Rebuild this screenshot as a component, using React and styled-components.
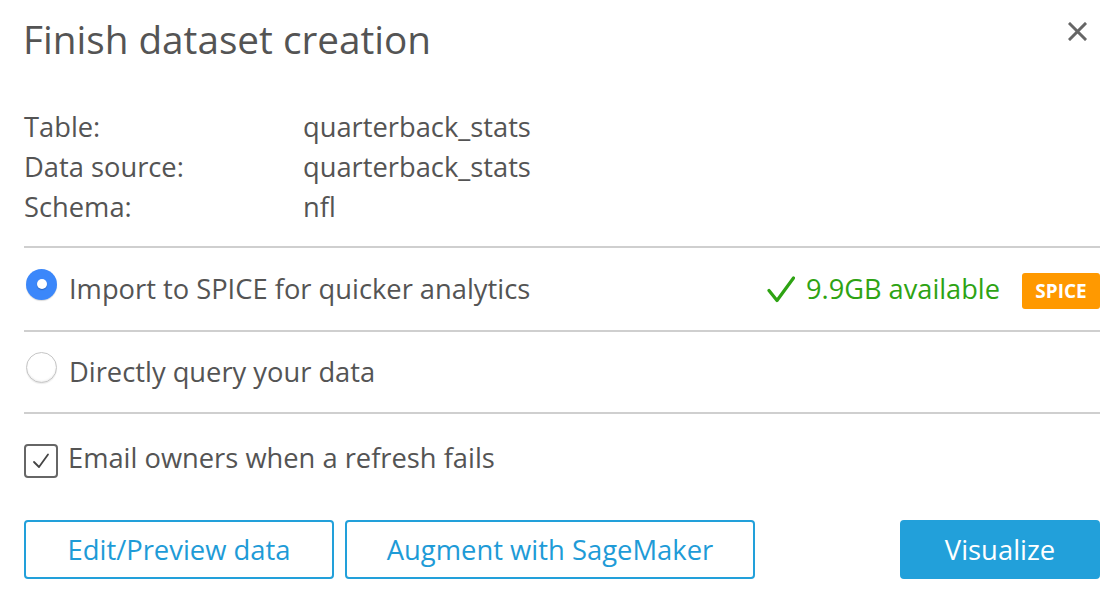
import React from "react";
import styled, { createGlobalStyle } from "styled-components";

const GlobalStyle = createGlobalStyle`
  html, body { margin: 0; padding: 0; background: #fff; }
  body { font-family: "Open Sans", "Noto Sans", sans-serif; color: #545454; }
  * { box-sizing: border-box; }
`;

const Dialog = styled.div`
  width: 1120px;
  height: 602px;
  padding: 16px 20px 0 23px;
  background: #fff;
`;

const Header = styled.div`
  display: flex;
  justify-content: space-between;
  align-items: flex-start;
`;

const Title = styled.h1`
  margin: 0;
  font-size: 38.7px;
  line-height: 46px;
  font-weight: 400;
  color: #545454;
`;

const CloseButton = styled.button`
  width: 19px;
  height: 19px;
  margin: 6px 13px 0 0;
  padding: 0;
  border: 0;
  background: none;
  display: flex;
  cursor: pointer;
`;

const InfoGrid = styled.div`
  display: grid;
  grid-template-columns: 279px 1fr;
  margin-top: 45px;
  padding: 0 0 19px 1px;
  font-size: 27.3px;
  line-height: 40px;
  color: #545454;
`;

const InfoLabel = styled.div``;
const InfoValue = styled.div``;

const Divider = styled.div`
  height: 2px;
  background: #cfcfcf;
  margin-left: 1px;
`;

const OptionRow = styled.div`
  display: flex;
  align-items: center;
  height: ${(p) => p.$h}px;
  padding-left: 3px;
`;

const Radio = styled.span`
  width: 31px;
  height: 31px;
  border-radius: 50%;
  flex: none;
  margin-bottom: 9px;
  margin-right: 12px;
  display: flex;
  align-items: center;
  justify-content: center;
  background: ${(p) => (p.$checked ? "#3b87fa" : "#fff")};
  border: ${(p) => (p.$checked ? "none" : "1.5px solid #c6c6c6")};
  box-shadow: ${(p) =>
    p.$checked ? "0 1px 1px rgba(0,0,0,0.15)" : "inset 0 -1px 2px rgba(0,0,0,0.08), 0 1px 1px rgba(0,0,0,0.08)"};
`;

const RadioDot = styled.span`
  width: 10px;
  height: 10px;
  border-radius: 50%;
  background: #fff;
  margin-top: -1px;
  box-shadow: 0 1px 1px rgba(0, 0, 0, 0.25);
`;

const OptionLabel = styled.span`
  font-size: 27.3px;
  line-height: 40px;
  color: #545454;
  flex: 1;
`;

const Availability = styled.span`
  display: flex;
  align-items: center;
  gap: 11px;
  font-size: 27.2px;
  font-weight: 500;
  line-height: 40px;
  color: #2ea313;
  margin-right: 22px;
`;

const Badge = styled.span`
  width: 78px;
  height: 36px;
  border-radius: 3px;
  background: #ff9900;
  color: #fff;
  font-size: 19px;
  font-weight: 700;
  display: flex;
  align-items: center;
  justify-content: center;
  margin-top: 4px;
`;

const CheckRow = styled.div`
  display: flex;
  align-items: flex-start;
  padding-top: 23.5px;
  padding-left: 1px;
`;

const CheckBox = styled.span`
  width: 34px;
  height: 34px;
  flex: none;
  margin-top: 6.5px;
  margin-right: 10px;
  border: 2px solid #666;
  border-radius: 4px;
  display: flex;
  align-items: center;
  justify-content: center;
`;

const Buttons = styled.div`
  display: flex;
  align-items: center;
  margin-top: 42px;
  padding-left: 1px;
`;

const Button = styled.button`
  height: 59px;
  width: ${(p) => p.$w}px;
  margin-right: ${(p) => p.$mr || 0}px;
  margin-left: ${(p) => (p.$push ? "auto" : "0")};
  border-radius: 4px;
  border: 2px solid #22a0da;
  background: ${(p) => (p.$primary ? "#22a0da" : "#fff")};
  color: ${(p) => (p.$primary ? "#fff" : "#1e9bd7")};
  font-family: "Open Sans", "Noto Sans", sans-serif;
  font-size: 27.4px;
  font-weight: 500;
  padding: 0;
  cursor: pointer;
`;

export default function App() {
  return (
    <>
      <GlobalStyle />
      <Dialog>
        <Header>
          <Title>Finish dataset creation</Title>
          <CloseButton aria-label="Close">
            <svg width="19" height="19" viewBox="0 0 19 19">
              <path d="M2 2 L17 17 M17 2 L2 17" stroke="#666" strokeWidth="3" strokeLinecap="square" />
            </svg>
          </CloseButton>
        </Header>
        <InfoGrid>
          <InfoLabel>Table:</InfoLabel>
          <InfoValue>quarterback_stats</InfoValue>
          <InfoLabel>Data source:</InfoLabel>
          <InfoValue>quarterback_stats</InfoValue>
          <InfoLabel>Schema:</InfoLabel>
          <InfoValue>nfl</InfoValue>
        </InfoGrid>
        <Divider />
        <OptionRow $h={82}>
          <Radio $checked>
            <RadioDot />
          </Radio>
          <OptionLabel>Import to SPICE for quicker analytics</OptionLabel>
          <Availability>
            <svg width="28" height="27" viewBox="0 0 28 27">
              <path d="M2 14.5 L10 24.5 L26.5 2" fill="none" stroke="#2ea313" strokeWidth="3.2" strokeLinecap="round" strokeLinejoin="round" />
            </svg>
            9.9GB available
          </Availability>
          <Badge>SPICE</Badge>
        </OptionRow>
        <Divider />
        <OptionRow $h={80}>
          <Radio />
          <OptionLabel>Directly query your data</OptionLabel>
        </OptionRow>
        <Divider />
        <CheckRow>
          <CheckBox>
            <svg width="18" height="16" viewBox="0 0 18 16">
              <path d="M2 9 L7 14 L16 1.5" fill="none" stroke="#444" strokeWidth="1.8" strokeLinecap="round" strokeLinejoin="round" />
            </svg>
          </CheckBox>
          <OptionLabel>Email owners when a refresh fails</OptionLabel>
        </CheckRow>
        <Buttons>
          <Button $w={310} $mr={11}>Edit/Preview data</Button>
          <Button $w={410}>Augment with SageMaker</Button>
          <Button $w={200} $primary $push>Visualize</Button>
        </Buttons>
      </Dialog>
    </>
  );
}
